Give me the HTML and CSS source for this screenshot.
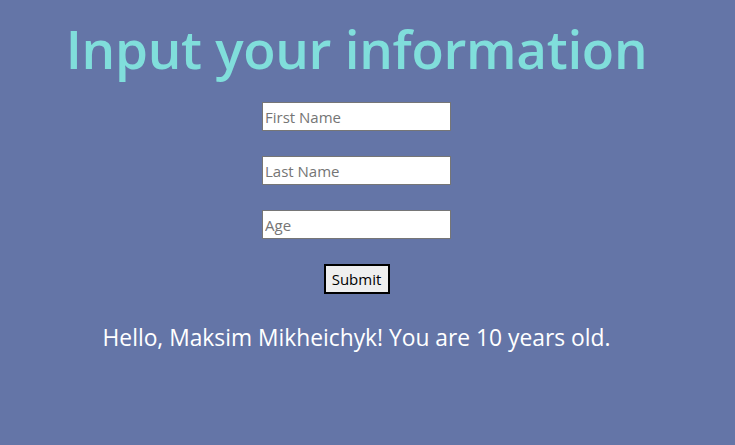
FILE: index.html
```html
<!DOCTYPE html>
<html>
<head>
<meta charset="utf-8">
<link rel="stylesheet" href="styles.css">
</head>
<body>
<div class="page">
  <h1 class="title">Input your information</h1>
  <form class="form">
    <input class="field" type="text" placeholder="First Name">
    <input class="field" type="text" placeholder="Last Name">
    <input class="field" type="text" placeholder="Age">
    <button class="submit" type="button">Submit</button>
  </form>
  <p class="greeting">Hello, Maksim Mikheichyk! You are 10 years old.</p>
</div>
</body>
</html>
```
FILE: styles.css
```css
html, body {
  margin: 0;
  padding: 0;
  height: 100%;
  background: #6475a7;
}
body {
  font-family: "Open Sans", "Noto Sans", sans-serif;
}
.page {
  width: 713px;
  display: flex;
  flex-direction: column;
  align-items: center;
}
.title {
  margin: 13px 0 0;
  font-size: 53px;
  font-weight: 600;
  line-height: 72px;
  color: #80dedb;
  letter-spacing: -0.3px;
}
.form {
  margin-top: 17px;
  display: flex;
  flex-direction: column;
  align-items: center;
  gap: 25px;
}
.field {
  box-sizing: border-box;
  width: 189px;
  height: 29px;
  margin: 0;
  padding: 0 2px;
  border: 1px solid #767676;
  background: #fff;
  font-family: inherit;
  font-size: 15px;
  color: #000;
  outline: none;
}
.field::placeholder {
  color: #757575;
}
.submit {
  box-sizing: border-box;
  width: 66px;
  height: 30px;
  margin: 0;
  padding: 0;
  border: 2px solid #000;
  background: #efefef;
  font-family: inherit;
  font-size: 15px;
  color: #000;
}
.greeting {
  margin: 29px 0 0;
  font-size: 22.8px;
  line-height: 30px;
  color: #fff;
}
```
